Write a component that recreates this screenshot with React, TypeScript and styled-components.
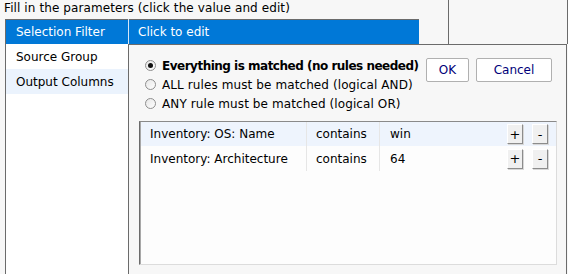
import React from "react";
import styled, { createGlobalStyle } from "styled-components";

const GlobalStyle = createGlobalStyle`
  html, body {
    margin: 0;
    padding: 0;
    background: #f7f7f7;
  }
  body {
    font-family: "DejaVu Sans", Verdana, sans-serif;
    font-size: 12px;
    color: #000;
  }
`;

const Root = styled.div`
  display: grid;
  grid-template-columns: 5px 124px 290px 29px 120px;
  grid-template-rows: 19px 25px 1fr;
  height: 274px;
  overflow: hidden;
`;

const Title = styled.div`
  grid-column: 1 / 5;
  grid-row: 1;
  padding-left: 4px;
  line-height: 17px;
  white-space: nowrap;
  letter-spacing: 0.1px;
`;

const SideBox = styled.div`
  grid-column: 5;
  grid-row: 1 / 3;
  border-left: 1px solid #6b6b6b;
  border-right: 1px solid #6b6b6b;
`;

const NavList = styled.div`
  grid-column: 2;
  grid-row: 2 / 4;
  border: 1px solid #6b6b6b;
  border-bottom: none;
  background: #fff;
`;

const NavItem = styled.div<{ $selected?: boolean; $hover?: boolean }>`
  height: 25px;
  display: flex;
  align-items: center;
  padding-left: 10px;
  background: ${(p) => (p.$selected ? "#0078d7" : p.$hover ? "#ebf3fd" : "transparent")};
  color: ${(p) => (p.$selected ? "#fff" : "#000")};
  &:first-child {
    height: 24px;
  }
`;

const Header = styled.div`
  grid-column: 3;
  grid-row: 2;
  border-top: 1px solid #6b6b6b;
  background: #0078d7;
  color: #fff;
  display: flex;
  align-items: center;
  padding-left: 9px;
  box-shadow: -1px 0 0 #d4e6f8;
`;

const Panel = styled.div`
  grid-column: 3 / 6;
  grid-row: 3;
  border-top: 1px solid #6b6b6b;
  border-right: 1px solid #6b6b6b;
  margin-right: 1px;
  padding: 11px 9px 0 10px;
  display: flex;
  flex-direction: column;
`;

const TopRow = styled.div`
  display: flex;
  align-items: flex-start;
`;

const Options = styled.div`
  display: flex;
  flex-direction: column;
`;

const Option = styled.label<{ $bold?: boolean }>`
  height: 19px;
  display: flex;
  align-items: center;
  gap: 6px;
  padding-left: 6px;
  font-weight: ${(p) => (p.$bold ? "bold" : "normal")};
  letter-spacing: ${(p) => (p.$bold ? "-0.5px" : "0.1px")};
  white-space: nowrap;
`;

const Radio = styled.span<{ $checked?: boolean }>`
  width: 11px;
  height: 11px;
  box-sizing: border-box;
  border-radius: 50%;
  border: 1px solid #8e8e8e;
  background: linear-gradient(135deg, #e6e6e6, #ffffff);
  display: flex;
  align-items: center;
  justify-content: center;
  &::after {
    content: "";
    width: 5px;
    height: 5px;
    border-radius: 50%;
    background: ${(p) => (p.$checked ? "#111" : "transparent")};
  }
`;

const Buttons = styled.div`
  margin-left: auto;
  margin-top: 2px;
  margin-right: 5px;
  display: flex;
  gap: 7px;
`;

const Button = styled.button<{ $width: number }>`
  width: ${(p) => p.$width}px;
  height: 24px;
  background: #fff;
  border: 1px solid #b0b0b0;
  border-radius: 2px;
  color: #00007a;
  font-family: "DejaVu Sans", Verdana, sans-serif;
  font-size: 12px;
  padding: 0;
`;

const RuleTable = styled.div`
  margin-top: 8px;
  height: 144px;
  box-sizing: border-box;
  background: #fdfdfd;
  border: 1px solid;
  border-color: #8a8a8a #dcdcdc #dcdcdc #6b6b6b;
  box-shadow: inset 1px 0 0 #a8a8a8;
  padding-left: 1px;
`;

const RuleRow = styled.div<{ $hover?: boolean; $height: number }>`
  display: grid;
  grid-template-columns: 166px 73px 1fr;
  height: ${(p) => p.$height}px;
  background: ${(p) => (p.$hover ? "#eef4fd" : "transparent")};
`;

const Cell = styled.div<{ $pad: number; $divider?: boolean }>`
  display: flex;
  align-items: center;
  padding-left: ${(p) => p.$pad}px;
  border-right: ${(p) => (p.$divider ? "1px solid #e6e6e6" : "none")};
  white-space: nowrap;
`;

const ValueCell = styled(Cell)`
  padding-right: 8px;
`;

const RowButtons = styled.div`
  margin-left: auto;
  display: flex;
  gap: 9px;
`;

const SmallButton = styled.span`
  width: 16px;
  height: 20px;
  box-sizing: border-box;
  background: #f0f0f0;
  border: 1px solid;
  border-color: #ffffff #8c8c8c #8c8c8c #ffffff;
  box-shadow: 1px 1px 0 #d8d8d8;
  display: flex;
  align-items: center;
  justify-content: center;
  font-size: 13px;
  line-height: 1;
`;

const rules = [
  { field: "Inventory: OS: Name", op: "contains", value: "win", height: 24, hover: true },
  { field: "Inventory: Architecture", op: "contains", value: "64", height: 25, hover: false },
];

export default function App() {
  return (
    <>
      <GlobalStyle />
      <Root>
        <Title>Fill in the parameters (click the value and edit)</Title>
        <SideBox />
        <NavList>
          <NavItem $selected>Selection Filter</NavItem>
          <NavItem>Source Group</NavItem>
          <NavItem $hover>Output Columns</NavItem>
        </NavList>
        <Header>Click to edit</Header>
        <Panel>
          <TopRow>
            <Options>
              <Option $bold>
                <Radio $checked />
                Everything is matched (no rules needed)
              </Option>
              <Option>
                <Radio />
                ALL rules must be matched (logical AND)
              </Option>
              <Option>
                <Radio />
                ANY rule must be matched (logical OR)
              </Option>
            </Options>
            <Buttons>
              <Button $width={43}>OK</Button>
              <Button $width={76}>Cancel</Button>
            </Buttons>
          </TopRow>
          <RuleTable>
            {rules.map((r) => (
              <RuleRow key={r.field} $hover={r.hover} $height={r.height}>
                <Cell $pad={9} $divider>
                  {r.field}
                </Cell>
                <Cell $pad={9} $divider>
                  {r.op}
                </Cell>
                <ValueCell $pad={10}>
                  {r.value}
                  <RowButtons>
                    <SmallButton>+</SmallButton>
                    <SmallButton>-</SmallButton>
                  </RowButtons>
                </ValueCell>
              </RuleRow>
            ))}
          </RuleTable>
        </Panel>
      </Root>
    </>
  );
}
